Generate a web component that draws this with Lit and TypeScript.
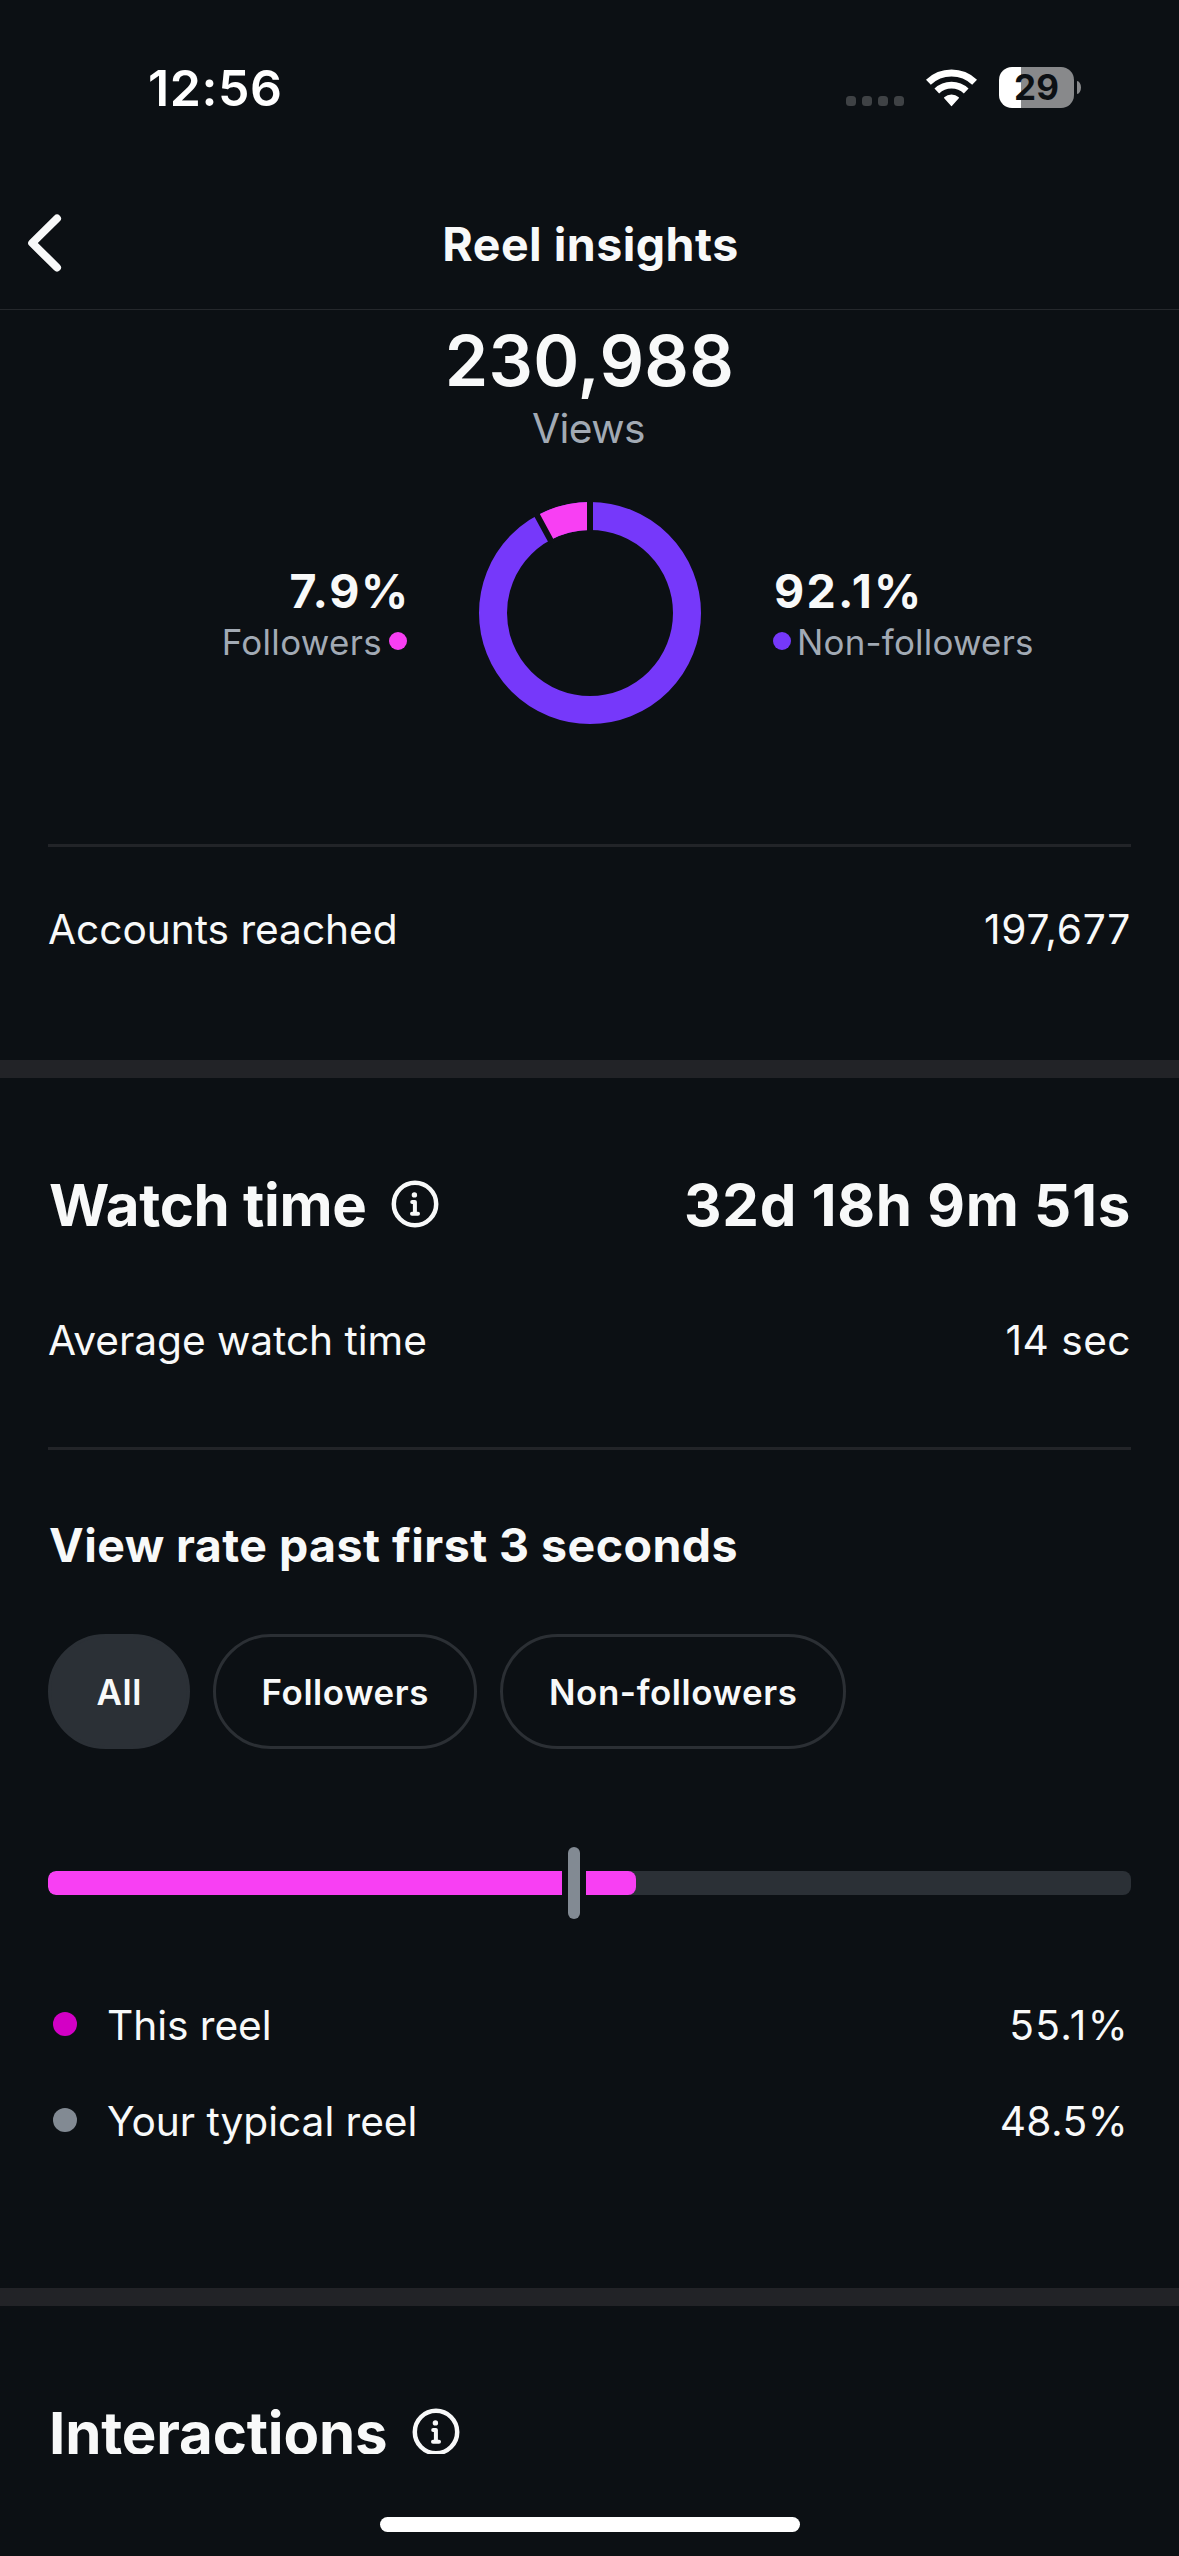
import { LitElement, html, css, svg } from "lit";
import { customElement, property, state } from "lit/decorators.js";
import { classMap } from "lit/directives/class-map.js";

@customElement("info-icon")
class InfoIcon extends LitElement {
  static styles = css`
    :host { display: block; width: 48px; height: 48px; }
    .icon { display: block; width: 48px; height: 48px; fill: none; stroke: #f8f9f9; stroke-linecap: round; stroke-linejoin: round; }
    .dot { fill: #f8f9f9; stroke: none; }
  `;
  render() {
    return html`<svg class="icon" viewBox="0 0 48 48">
      <circle cx="24" cy="24" r="21.2" stroke-width="4.5"></circle>
      <circle class="dot" cx="23.4" cy="14.9" r="2.7"></circle>
      <path d="M21.2 22h2.7v11.6M21 33.7h6" stroke-width="4"></path>
    </svg>`;
  }
}

@customElement("status-bar")
class StatusBar extends LitElement {
  static styles = css`
    :host { display: flex; align-items: center; justify-content: space-between; height: 175px; padding: 0 98px 0 148px; }
    .time { font-size: 50px; font-weight: 600; letter-spacing: 0.58px; line-height: 60px; color: #fff; }
    .indicators { display: flex; align-items: center; gap: 22px; }
    .cell { display: flex; gap: 6px; margin-top: 27px; }
    .cell-dot { width: 10px; height: 10px; border-radius: 3.5px; background: #3f4245; }
    .wifi { display: block; width: 51px; height: 38px; }
    .battery { display: flex; align-items: center; gap: 3px; }
    .body { width: 75px; height: 41px; border-radius: 13px; display: grid; place-items: center;
      background: linear-gradient(to right, #fff 22px, #88898b 22px);
      font-size: 35px; font-weight: 700; line-height: 41px; color: #0c1014; }
    .nub { width: 4px; height: 13px; border-radius: 0 4px 4px 0 / 0 6.5px 6.5px 0; background: #88898b; }
  `;
  render() {
    return html`
      <div class="time">12:56</div>
      <div class="indicators">
        <div class="cell">${[0, 1, 2, 3].map(() => html`<div class="cell-dot"></div>`)}</div>
        <svg class="wifi" viewBox="0 0 51 38" fill="none" stroke="#fff">
          <path d="M2.4 13.2a33.5 33.5 0 0 1 46.2 0" stroke-width="7"></path>
          <path d="M10.8 22a21.3 21.3 0 0 1 29.4 0" stroke-width="6.8"></path>
          <path d="M18.2 29.3a1 1 0 0 1 0-1.1a11.5 11.5 0 0 1 14.6 0a1 1 0 0 1 0 1.1l-6.5 7.3a1 1 0 0 1-1.6 0z" fill="#fff" stroke="none"></path>
        </svg>
        <div class="battery"><div class="body">29</div><div class="nub"></div></div>
      </div>`;
  }
}

@customElement("audience-ring")
class AudienceRing extends LitElement {
  @property({ type: Number }) share = 7.9;
  static styles = css`
    :host { display: block; width: 222px; height: 222px; }
    .ring { display: block; width: 222px; height: 222px; }
  `;
  render() {
    const angle = (-this.share / 100) * 2 * Math.PI;
    const at = (r: number) => `${111 + r * Math.sin(angle)} ${111 - r * Math.cos(angle)}`;
    return html`<svg class="ring" viewBox="0 0 222 222" fill="none">
      <circle cx="111" cy="111" r="97" stroke="#7638fa" stroke-width="28"></circle>
      ${svg`<path d="M${at(97)}A97 97 0 0 1 111 14" stroke="#f83ff3" stroke-width="28"></path>
      <path d="M111 -2V32M${at(80)}L${at(114)}" stroke="#0c1014" stroke-width="6"></path>`}
    </svg>`;
  }
}

@customElement("rate-bar")
class RateBar extends LitElement {
  @property({ type: Number }) value = 0;
  @property({ type: Number }) typical = 0;
  static styles = css`
    :host { display: block; position: relative; height: 72px; }
    .track { display: flex; height: 24px; padding: 24px 0; }
    .rail { flex: 1; background: #2b3036; border-radius: 8px; overflow: hidden; }
    .fill { height: 24px; background: #f83ff3; border-radius: 8px; }
    .marker { position: absolute; top: 0; height: 72px; width: 12px; margin-left: -6px; border-radius: 6px; background: #828a93; }
    .cut { position: absolute; top: 24px; height: 24px; width: 24px; margin-left: -12px; background: #0c1014; }
  `;
  render() {
    return html`
      <div class="track"><div class="rail"><div class="fill" style="width:${this.value}%"></div></div></div>
      <div class="cut" style="left:${this.typical}%"></div>
      <div class="marker" style="left:${this.typical}%"></div>`;
  }
}

@customElement("app-root")
class AppRoot extends LitElement {
  @state() private audience = "All";

  static styles = css`
    :host { display: flex; flex-direction: column; width: 1179px; height: 2556px; overflow: hidden;
      background: #0c1014; color: #f8f9f9; font-family: Inter, "Liberation Sans", sans-serif; }
    .nav { display: grid; grid-template-columns: 120px 1fr 118px; align-items: center; height: 134px; border-bottom: 1px solid #25282c; }
    .back { display: block; width: 44px; height: 66px; margin: 1px 0 0 22px; }
    .title { font-size: 46.5px; font-weight: 700; letter-spacing: 0.48px; line-height: 60px; margin-top: 4px; text-align: center; }
    .summary { display: flex; flex-direction: column; align-items: center; padding-top: 11px; }
    .total { font-size: 69.8px; font-weight: 600; letter-spacing: 0.28px; line-height: 80px; }
    .caption { font-size: 40.7px; letter-spacing: -0.5px; line-height: 54px; margin: 1px 2px 0 0; color: #a2aab4; }
    .split { display: grid; grid-template-columns: 407px 222px 1fr; column-gap: 72px; margin-top: 46px; height: 342px; }
    .side { display: flex; flex-direction: column; align-items: flex-start; padding-top: 61px; }
    .side.end { align-items: flex-end; }
    .pct { font-size: 46.5px; font-weight: 700; line-height: 56px; letter-spacing: 2.3px; margin-left: 1px; }
    .end .pct { letter-spacing: 1.7px; margin-right: -3px; }
    .key { display: flex; align-items: center; gap: 6px; font-size: 34.9px; line-height: 47px; letter-spacing: 0.23px; color: #a2aab4; }
    .end .key { gap: 7px; letter-spacing: 0.35px; }
    .key-dot { width: 18px; height: 18px; border-radius: 50%; background: #7638fa; margin-bottom: 3px; }
    .end .key-dot { background: #f83ff3; }
    .rule { height: 3px; margin: 0 48px; background: #222428; }
    .row { display: flex; justify-content: space-between; align-items: center; padding: 0 48px; font-size: 40.7px; line-height: 50px; letter-spacing: -0.05px; }
    .reached { height: 166px; margin-bottom: 47px; }
    .average { margin: 76px 0 81px; }
    .wide { letter-spacing: 0.75px; }
    .sec { letter-spacing: 0.45px; }
    .band { height: 18px; flex: none; background: #222327; }
    .head { display: flex; align-items: center; height: 70px; padding: 0 48px; font-size: 58.2px; font-weight: 700; line-height: 70px; letter-spacing: -0.3px; }
    .watch { margin-top: 92px; }
    .watch .name { margin-left: 1px; }
    .head info-icon { margin: -2px 0 0 24.5px; }
    .head .amount { margin-left: auto; letter-spacing: 0.7px; }
    .subtitle { font-size: 46.5px; font-weight: 700; letter-spacing: 0.44px; line-height: 60px; margin: 65px 49px 59px; }
    .chips { display: flex; gap: 23px; padding: 0 48px; }
    .chip { box-sizing: border-box; height: 115px; padding: 1px 45.2px 0 45.8px; border: 3px solid #2b2f34; border-radius: 57.5px; background: none;
      color: inherit; font-family: inherit; font-size: 34.9px; font-weight: 600; letter-spacing: 0.6px; line-height: 48px; white-space: nowrap; }
    .chip.on { background: #2b3036; border-color: #2b3036; padding: 1px 44.8px 0 45.5px; }
    rate-bar { margin: 98px 48px 59px; }
    .legend { display: flex; align-items: center; height: 96px; padding: 0 50px 0 53px; font-size: 40.7px; line-height: 50px; letter-spacing: -0.05px; }
    .bullet { width: 24px; height: 24px; border-radius: 50%; background: #d300c5; margin: 0 30px 4px 0; }
    .bullet.typical { background: #828a93; }
    .legend .rate { margin-left: auto; letter-spacing: 1.35px; }
    .legend .rate.typ { letter-spacing: 0.39px; margin-right: 1px; }
    .spacer { height: 118px; }
    .clip { height: 148px; overflow: hidden; }
    .interactions { margin-top: 92px; letter-spacing: -0.17px; }
    .interactions .name { margin-left: 1px; }
    .interactions info-icon { margin-left: 25px; }
    .home { display: flex; justify-content: center; padding-top: 63px; }
    .handle { width: 420px; height: 15px; border-radius: 8px; background: #fff; }
  `;

  render() {
    return html`
      <status-bar></status-bar>
      <div class="nav">
        <svg class="back" viewBox="0 0 44 66" fill="none" stroke="#f8f9f9" stroke-width="8" stroke-linecap="round" stroke-linejoin="round">
          <path d="M35 8.5L10.2 33L35 57.5"></path>
        </svg>
        <div class="title">Reel insights</div>
      </div>
      <div class="summary">
        <div class="total">230,988</div>
        <div class="caption">Views</div>
      </div>
      <div class="split">
        <div class="side end">
          <div class="pct">7.9%</div>
          <div class="key"><span>Followers</span><div class="key-dot"></div></div>
        </div>
        <audience-ring .share=${7.9}></audience-ring>
        <div class="side">
          <div class="pct">92.1%</div>
          <div class="key"><div class="key-dot"></div><span>Non-followers</span></div>
        </div>
      </div>
      <div class="rule"></div>
      <div class="row reached"><span>Accounts reached</span><span class="wide">197,677</span></div>
      <div class="band"></div>

      <div class="head watch"><span class="name">Watch time</span><info-icon></info-icon><span class="amount">32d 18h 9m 51s</span></div>
      <div class="row average"><span>Average watch time</span><span class="sec">14 sec</span></div>
      <div class="rule"></div>
      <div class="subtitle">View rate past first 3 seconds</div>
      <div class="chips">
        ${["All", "Followers", "Non-followers"].map(
          (name) => html`<button class=${classMap({ chip: true, on: name === this.audience })}
            @click=${() => (this.audience = name)}>${name}</button>`
        )}
      </div>
      <rate-bar .value=${54.3} .typical=${48.57}></rate-bar>
      <div class="legend"><div class="bullet"></div><span>This reel</span><span class="rate">55.1%</span></div>
      <div class="legend"><div class="bullet typical"></div><span>Your typical reel</span><span class="rate typ">48.5%</span></div>
      <div class="spacer"></div>
      <div class="band"></div>

      <div class="clip">
        <div class="head interactions"><span class="name">Interactions</span><info-icon></info-icon></div>
      </div>
      <div class="home"><div class="handle"></div></div>
    `;
  }
}
